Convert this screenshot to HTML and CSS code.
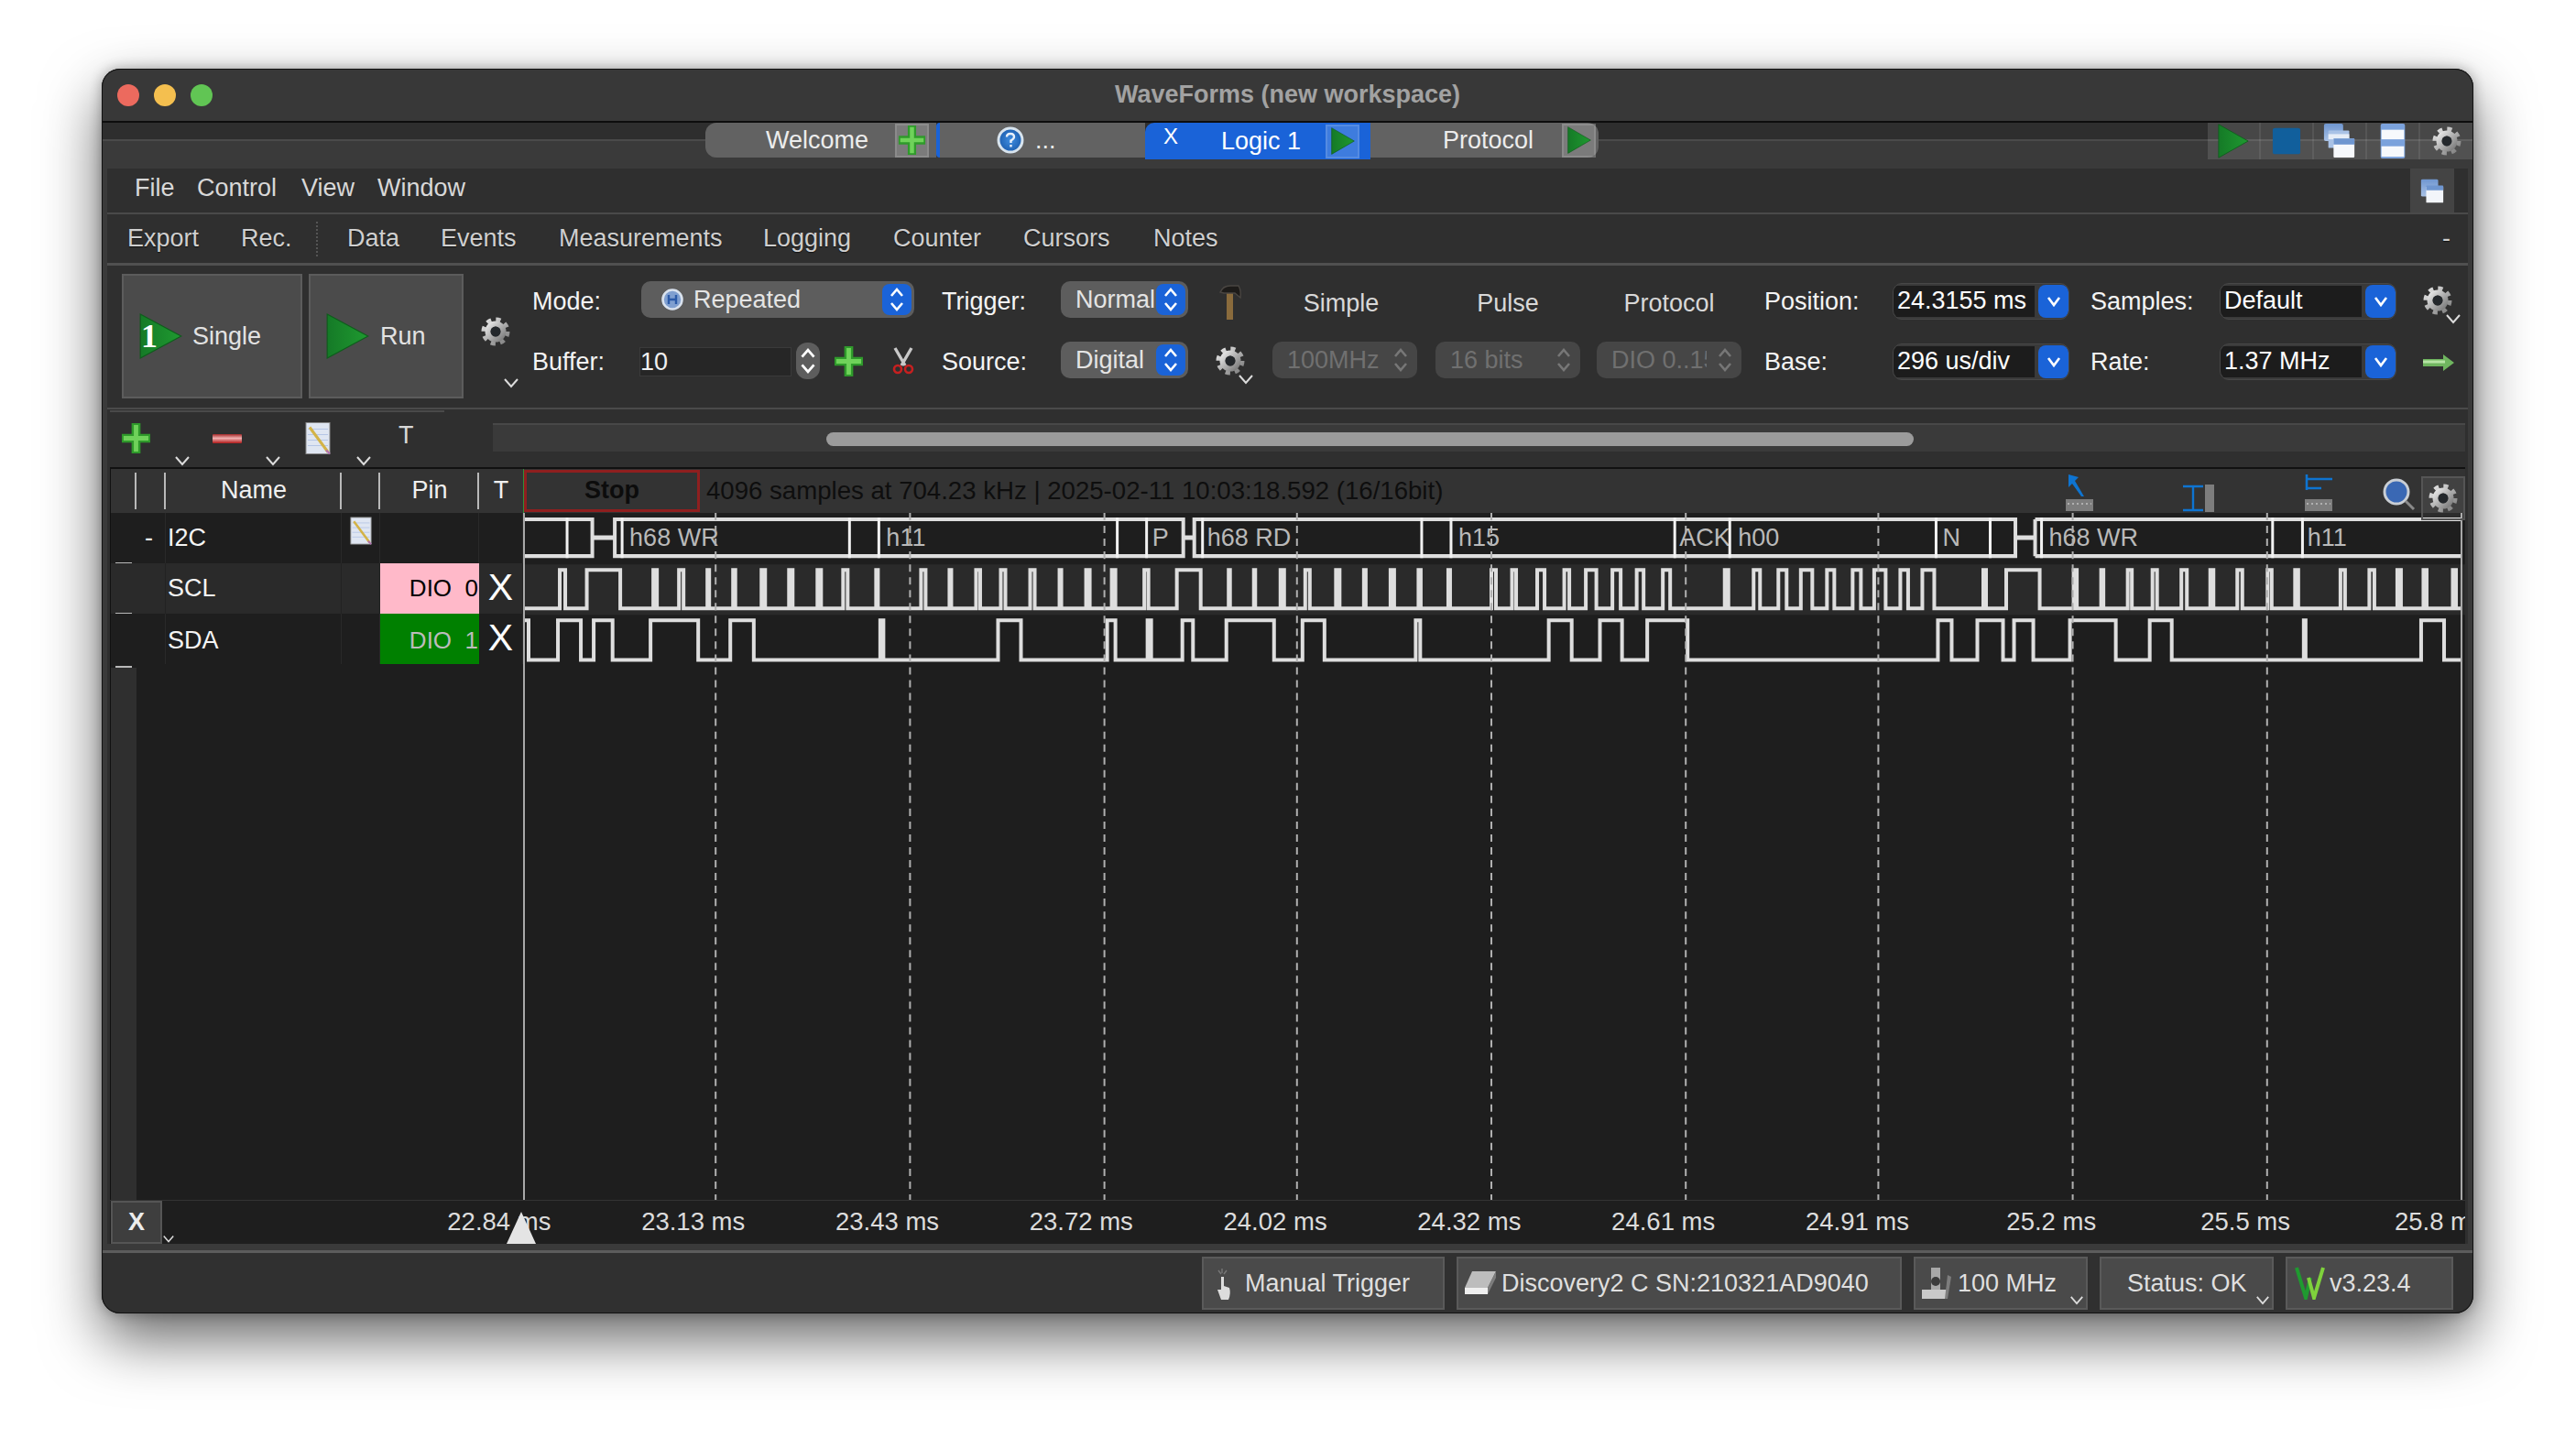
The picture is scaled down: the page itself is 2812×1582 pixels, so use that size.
FILE: index.html
```html
<!DOCTYPE html>
<html lang="en">
<head>
<meta charset="utf-8">
<title>WaveForms (new workspace)</title>
<link rel="stylesheet" href="styles.css">
</head>
<body>
<svg class="sprites" aria-hidden="true">
  <defs>
    <linearGradient id="gGray" x1="0" y1="0" x2="1" y2="1"><stop offset="0" stop-color="#e6e6e6"/><stop offset="1" stop-color="#7c7c7c"/></linearGradient>
    <linearGradient id="gGreen" x1="0" y1="0" x2="1" y2="0"><stop offset="0" stop-color="#157a27"/><stop offset="1" stop-color="#1f9a30"/></linearGradient>
    <linearGradient id="gRed" x1="0" y1="0" x2="0" y2="1"><stop offset="0" stop-color="#a52a2a"/><stop offset=".45" stop-color="#f0b0b0"/><stop offset="1" stop-color="#b01818"/></linearGradient>
    <linearGradient id="gWin" x1="0" y1="0" x2="0" y2="1"><stop offset="0" stop-color="#6f96d0"/><stop offset="1" stop-color="#a9c2e6"/></linearGradient>
    <radialGradient id="gHelp"><stop offset="0" stop-color="#3f8de0"/><stop offset="1" stop-color="#1d5fb0"/></radialGradient>
    <symbol id="i-gear" viewBox="0 0 32 32">
      <circle cx="16" cy="16" r="13" fill="none" stroke="url(#gGray)" stroke-width="5" stroke-dasharray="5.1 5.1"/>
      <circle cx="16" cy="16" r="8.5" fill="none" stroke="url(#gGray)" stroke-width="6"/>
      <circle cx="16" cy="16" r="5.4" fill="#24282c"/>
    </symbol>
    <symbol id="i-play" viewBox="0 0 40 48" preserveAspectRatio="none">
      <polygon points="1,1 39,24 1,47" fill="url(#gGreen)" stroke="#0f5c1c" stroke-width="1"/>
    </symbol>
    <symbol id="i-plus" viewBox="0 0 34 36" preserveAspectRatio="none">
      <path d="M17 1V35M1 18H33" stroke="#2f9a2b" stroke-width="10"/>
      <path d="M17 3V33M3 18H31" stroke="#6fd25a" stroke-width="5"/>
    </symbol>
    <symbol id="i-minus" viewBox="0 0 32 10"><rect width="32" height="10" rx="1" fill="url(#gRed)"/></symbol>
    <symbol id="i-chev" viewBox="0 0 18 12"><polyline points="2,2 9,10 16,2" fill="none" stroke="#dcdcdc" stroke-width="2"/></symbol>
    <symbol id="i-updown" viewBox="0 0 24 34"><polyline points="6,13 12,6 18,13" fill="none" stroke="#fff" stroke-width="2.6"/><polyline points="6,21 12,28 18,21" fill="none" stroke="#fff" stroke-width="2.6"/></symbol>
    <symbol id="i-updown-dim" viewBox="0 0 24 34"><polyline points="6,13 12,6 18,13" fill="none" stroke="#777" stroke-width="2.6"/><polyline points="6,21 12,28 18,21" fill="none" stroke="#777" stroke-width="2.6"/></symbol>
    <symbol id="i-down" viewBox="0 0 20 14"><polyline points="4,3 10,11 16,3" fill="none" stroke="#fff" stroke-width="2.6"/></symbol>
    <symbol id="i-help" viewBox="0 0 30 30">
      <circle cx="15" cy="15" r="13" fill="url(#gHelp)" stroke="#d8e4ee" stroke-width="3"/>
      <path d="M11 11.5Q11 8 15 8T19 11.5Q19 13.5 15.5 15.5V18M15.5 20V22.5" fill="none" stroke="#e8f0fa" stroke-width="2.4"/>
    </symbol>
    <symbol id="i-repeat" viewBox="0 0 24 24">
      <circle cx="12" cy="12" r="10.5" fill="#7f9fd0" stroke="#d9e2ee" stroke-width="2.6"/>
      <path d="M8 7V17M16 7V17M8 12H16" stroke="#2b5aa8" stroke-width="2.4"/>
    </symbol>
    <symbol id="i-stop" viewBox="0 0 34 44" preserveAspectRatio="none"><rect x="1" y="1" width="32" height="42" rx="3" fill="#115f9c"/></symbol>
    <symbol id="i-wins2" viewBox="0 0 30 40" preserveAspectRatio="none">
      <rect x="2" y="1" width="20" height="28" rx="2" fill="url(#gWin)"/>
      <rect x="8" y="13" width="20" height="26" rx="1" fill="#f2f5fa"/>
      <rect x="8" y="11" width="20" height="8" rx="1" fill="#6f96d0"/>
    </symbol>
    <symbol id="i-wins3" viewBox="0 0 38 40">
      <rect x="1" y="0" width="22" height="20" rx="2" fill="url(#gWin)"/>
      <rect x="6" y="8" width="24" height="20" rx="1" fill="#a9c2e6"/>
      <rect x="6" y="12" width="24" height="6" fill="#e6edf7"/>
      <rect x="12" y="17" width="24" height="22" rx="1" fill="#f7f9fc"/>
      <rect x="12" y="17" width="24" height="7" fill="#6f96d0"/>
    </symbol>
    <symbol id="i-rows" viewBox="0 0 30 40">
      <rect x="1" y="0" width="28" height="40" rx="2" fill="#7ba2dc"/>
      <rect x="2" y="7" width="26" height="11" fill="#f7f9fc"/>
      <rect x="2" y="26" width="26" height="12" fill="#f7f9fc"/>
    </symbol>
    <symbol id="i-hammer" viewBox="0 0 30 38">
      <rect x="12" y="8" width="7" height="30" fill="#8a6b3c"/>
      <path d="M5 8Q8 1 16 1H25Q28 6 27 14L21 9H9Z" fill="#1d1b19" stroke="#4a4642" stroke-width="1.4"/>
    </symbol>
    <symbol id="i-scissors" viewBox="0 0 24 30">
      <path d="M3 1L14 20M21 1L10 20" stroke="#c9c9c9" stroke-width="3.4"/>
      <circle cx="6" cy="24" r="4" fill="none" stroke="#c62020" stroke-width="2.6"/>
      <circle cx="18" cy="24" r="4" fill="none" stroke="#c62020" stroke-width="2.6"/>
    </symbol>
    <symbol id="i-note" viewBox="0 0 28 36">
      <rect x="1" y="1" width="26" height="34" fill="#dfe6f2" stroke="#8a8a8a" stroke-width="1"/>
      <path d="M3 8H25M3 14H25M3 20H25M3 26H25" stroke="#b5c6e6" stroke-width="1"/>
      <path d="M5 6L25 33" stroke="#d3b347" stroke-width="3"/>
      <path d="M23 31L27 35" stroke="#b06fb0" stroke-width="2"/>
    </symbol>
    <symbol id="i-arrow" viewBox="0 0 34 18">
      <path d="M0 5H22V0L34 9L22 18V13H0Z" fill="#6fb55f"/>
      <path d="M0 8H24" stroke="#b6e3a4" stroke-width="3"/>
    </symbol>
    <symbol id="i-ruler-arrow" viewBox="0 0 30 40">
      <path d="M3 0L14 3L10 7L20 24H17L7 10L3 14Z" fill="#0e74d1"/>
      <rect y="27" width="30" height="13" fill="#7d7d7d"/>
      <path d="M2 32H28" stroke="#b0b0b0" stroke-width="2" stroke-dasharray="2 3"/>
    </symbol>
    <symbol id="i-ruler-i" viewBox="0 0 34 30" preserveAspectRatio="none">
      <path d="M0 2H22M0 28H22M11 2V28" stroke="#0e74d1" stroke-width="2.4"/>
      <rect x="24" y="0" width="10" height="30" fill="#7d7d7d"/>
    </symbol>
    <symbol id="i-ruler-f" viewBox="0 0 30 40">
      <path d="M2 0V17M2 5H30M2 15H18" stroke="#0e74d1" stroke-width="2.6"/>
      <rect y="27" width="30" height="13" fill="#7d7d7d"/>
      <path d="M2 32H28" stroke="#b0b0b0" stroke-width="2" stroke-dasharray="2 3"/>
    </symbol>
    <symbol id="i-zoom" viewBox="0 0 36 36">
      <circle cx="15" cy="15" r="13" fill="#3a68b4" stroke="#c9ced4" stroke-width="3"/>
      <path d="M25 25L34 34" stroke="#8a8a8a" stroke-width="3"/>
    </symbol>
    <symbol id="i-hand" viewBox="0 0 20 38">
      <path d="M8 3V8M4 5L7 9M13 5L10 9" stroke="#777" stroke-width="1.4"/>
      <path d="M7 12H10V22L16 24Q18 30 15 37H7L3 26H7Z" fill="#dcdcdc"/>
    </symbol>
    <symbol id="i-device" viewBox="0 0 36 30">
      <path d="M10 2H36L27 20H2Z" fill="#bdbdbd"/>
      <path d="M2 20H27V27H2Z" fill="#efefef"/>
      <path d="M27 20L36 2V9L27 27Z" fill="#7c7c7c"/>
    </symbol>
    <symbol id="i-scope" viewBox="0 0 36 38">
      <path d="M12 2H22V26H12Z" fill="#a8a8a8"/>
      <circle cx="17" cy="17" r="5" fill="#3b3b3b"/>
      <path d="M2 26H30L28 36H2Z" fill="#c9c9c9"/>
      <path d="M30 10L34 12L30 36H27Z" fill="#7d7d7d"/>
    </symbol>
    <symbol id="i-logo" viewBox="0 0 34 36">
      <polyline points="3,1 13,34 18,12" fill="none" stroke="#1f9a30" stroke-width="4"/>
      <polyline points="16,12 22,34 32,1" fill="none" stroke="#7fd23c" stroke-width="4"/>
    </symbol>
  </defs>
</svg>

<main class="window">
  <header class="titlebar">
    <div class="lights"><span class="light red"></span><span class="light yellow"></span><span class="light green"></span></div>
    <div class="title">WaveForms (new workspace)</div>
    <div></div>
  </header>

  <div class="tabrow">
    <div class="tabstrip">
      <div class="tab tab-welcome"><span class="tab-text welcome-text">Welcome</span><span class="tab-btn"><svg class="i-plus-sm"><use href="#i-plus"/></svg></span></div>
      <div class="tab-sliver"></div>
      <div class="tab tab-help"><svg class="i-help"><use href="#i-help"/></svg><span class="tab-text help-text">...</span></div>
      <div class="tab tab-active"><span class="tab-x">X</span><span class="tab-text logic-text">Logic 1</span><span class="tab-btn tab-btn-end"><svg class="i-play-sm"><use href="#i-play"/></svg></span></div>
      <div class="tab tab-protocol"><span class="tab-text protocol-text">Protocol</span><span class="tab-btn tab-btn-end"><svg class="i-play-sm"><use href="#i-play"/></svg></span></div>
    </div>
    <div class="tools">
      <span class="tool"><svg class="i-tool-play"><use href="#i-play"/></svg></span>
      <span class="tool"><svg class="i-tool-stop"><use href="#i-stop"/></svg></span>
      <span class="tool"><svg class="i-tool-wins"><use href="#i-wins3"/></svg></span>
      <span class="tool"><svg class="i-tool-rows"><use href="#i-rows"/></svg></span>
      <span class="tool"><svg class="i-tool-gear"><use href="#i-gear"/></svg></span>
    </div>
  </div>

  <div class="panel">
    <nav class="menu">
      <span class="menu-item m-file">File</span>
      <span class="menu-item m-control">Control</span>
      <span class="menu-item m-view">View</span>
      <span class="menu-item m-window">Window</span>
      <span class="menu-btn"><svg class="i-menu-wins"><use href="#i-wins2"/></svg></span>
    </nav>

    <nav class="subtabs">
      <span class="sub s-export">Export</span>
      <span class="sub s-rec">Rec.</span>
      <span class="sub-sep"></span>
      <span class="sub s-data">Data</span>
      <span class="sub s-events">Events</span>
      <span class="sub s-meas">Measurements</span>
      <span class="sub s-log">Logging</span>
      <span class="sub s-count">Counter</span>
      <span class="sub s-curs">Cursors</span>
      <span class="sub s-notes">Notes</span>
      <span class="sub s-dash">-</span>
    </nav>

    <section class="toolbar">
      <button class="bigbtn single"><span class="play-wrap"><svg class="i-big-play"><use href="#i-play"/></svg><span class="one">1</span></span><span>Single</span></button>
      <button class="bigbtn run"><svg class="i-big-play"><use href="#i-play"/></svg><span>Run</span></button>
      <div class="gearcol"><svg class="i-gear"><use href="#i-gear"/></svg><svg class="i-chev gearcol-chev"><use href="#i-chev"/></svg></div>

      <div class="form">
        <span class="lbl">Mode:</span>
        <div class="cell"><div class="select select-mode"><svg class="i-repeat"><use href="#i-repeat"/></svg><span class="sel-text">Repeated</span><span class="stepper"><svg><use href="#i-updown"/></svg></span></div></div>
        <span class="lbl">Trigger:</span>
        <div class="cell"><div class="select select-trig"><span class="sel-text clip">Normal</span><span class="stepper"><svg><use href="#i-updown"/></svg></span></div></div>
        <div class="cell"><svg class="i-hammer"><use href="#i-hammer"/></svg></div>
        <div class="cell"><span class="opt-lbl opt-simple">Simple</span></div>
        <div class="cell"><span class="opt-lbl">Pulse</span></div>
        <div class="cell"><span class="opt-lbl">Protocol</span></div>
        <span class="lbl">Position:</span>
        <div class="cell"><div class="combo"><span class="combo-field">24.3155 ms</span><span class="combo-btn"><svg><use href="#i-down"/></svg></span></div></div>
        <span class="lbl">Samples:</span>
        <div class="cell"><div class="combo"><span class="combo-field">Default</span><span class="combo-btn"><svg><use href="#i-down"/></svg></span></div></div>
        <div class="cell gearcell"><svg class="i-gear"><use href="#i-gear"/></svg><svg class="i-chev overlay-chev"><use href="#i-chev"/></svg></div>

        <span class="lbl">Buffer:</span>
        <div class="cell"><span class="numinput">10</span><span class="spin"><svg><use href="#i-updown"/></svg></span><svg class="i-plus-md"><use href="#i-plus"/></svg><svg class="i-scissors"><use href="#i-scissors"/></svg></div>
        <span class="lbl">Source:</span>
        <div class="cell"><div class="select select-trig"><span class="sel-text">Digital</span><span class="stepper"><svg><use href="#i-updown"/></svg></span></div></div>
        <div class="cell gearcell"><svg class="i-gear"><use href="#i-gear"/></svg><svg class="i-chev overlay-chev"><use href="#i-chev"/></svg></div>
        <div class="cell"><div class="select select-off"><span class="sel-text">100MHz</span><span class="dimstep"><svg><use href="#i-updown-dim"/></svg></span></div></div>
        <div class="cell"><div class="select select-off"><span class="sel-text">16 bits</span><span class="dimstep"><svg><use href="#i-updown-dim"/></svg></span></div></div>
        <div class="cell"><div class="select select-off"><span class="sel-text clip-dio">DIO 0..15</span><span class="dimstep"><svg><use href="#i-updown-dim"/></svg></span></div></div>
        <span class="lbl">Base:</span>
        <div class="cell"><div class="combo"><span class="combo-field">296 us/div</span><span class="combo-btn"><svg><use href="#i-down"/></svg></span></div></div>
        <span class="lbl">Rate:</span>
        <div class="cell"><div class="combo"><span class="combo-field">1.37 MHz</span><span class="combo-btn"><svg><use href="#i-down"/></svg></span></div></div>
        <div class="cell"><svg class="i-arrow"><use href="#i-arrow"/></svg></div>
      </div>
    </section>

    <section class="iconrow">
      <div class="icongroup"><span class="iconbox"><svg class="i-plus-md"><use href="#i-plus"/></svg></span><svg class="i-chev row-chev"><use href="#i-chev"/></svg></div>
      <div class="icongroup"><span class="iconbox"><svg class="i-minus"><use href="#i-minus"/></svg></span><svg class="i-chev row-chev"><use href="#i-chev"/></svg></div>
      <div class="icongroup"><span class="iconbox"><svg class="i-note"><use href="#i-note"/></svg></span><svg class="i-chev row-chev"><use href="#i-chev"/></svg></div>
      <span class="t-label">T</span>
      <div class="track"><div class="thumb"></div></div>
    </section>

    <section class="scope">
      <div class="channels">
        <div class="chan-head">
          <span class="c c1"></span><span class="c c2"></span><span class="c c3">Name</span><span class="c c4"></span><span class="c c5">Pin</span><span class="c c6">T</span>
        </div>
        <div class="chan-row row-dark">
          <span class="c c1"></span><span class="c c2 dash">-</span><span class="c c3 name">I2C</span><span class="c c4"><svg class="i-note-sm"><use href="#i-note"/></svg></span><span class="c c5"></span><span class="c c6"></span>
        </div>
        <div class="chan-row row-light">
          <span class="c c1"></span><span class="c c2"></span><span class="c c3 name">SCL</span><span class="c c4"></span><span class="c c5 pin pin-pink">DIO&nbsp;&nbsp;0</span><span class="c c6 xmark">X</span>
        </div>
        <div class="chan-row row-dark row-sda">
          <span class="c c1"></span><span class="c c2"></span><span class="c c3 name">SDA</span><span class="c c4"></span><span class="c c5 pin pin-green">DIO&nbsp;&nbsp;1</span><span class="c c6 xmark">X</span>
        </div>
        <div class="chan-rest"></div>
      </div>

      <div class="plot">
        <div class="plot-head">
          <span class="stop">Stop</span>
          <span class="acq">4096 samples at 704.23 kHz | 2025-02-11 10:03:18.592 (16/16bit)</span>
          <div class="plot-tools">
            <svg class="i-rul-a"><use href="#i-ruler-arrow"/></svg>
            <svg class="i-rul-i"><use href="#i-ruler-i"/></svg>
            <svg class="i-rul-f"><use href="#i-ruler-f"/></svg>
            <svg class="i-zoom"><use href="#i-zoom"/></svg>
            <span class="plot-gear"><svg class="i-gear"><use href="#i-gear"/></svg></span>
          </div>
        </div>
        <svg class="wave" viewBox="572 560 2118 748" preserveAspectRatio="none">
          <rect class="band-light" x="572" y="616" width="2118" height="55"/>
          <g class="bus-label">
            <text x="688" y="596">h68 WR</text><text x="968" y="596">h11</text><text x="1258" y="596">P</text>
            <text x="1318" y="596">h68 RD</text><text x="1592" y="596">h15</text><text x="1833" y="596">ACK</text>
            <text x="1897" y="596">h00</text><text x="2120" y="596">N</text><text x="2236" y="596">h68 WR</text><text x="2518" y="596">h11</text>
          </g>
          <g class="trace">
            <path d="M572 567H647.500V607H572M672 567H1292V607H672ZM1304 567H2199.500V607H1304ZM2221 567H2687M2221 607H2687M2221 567V607"/>
            <path class="bus-mid" d="M648 587H672M1292 587H1304M2199 587H2221"/>
            <path d="M572 664H612V622H618V664H641.500V622H678V664H714V622H718V664H742V622H747V664H773V622H775V664H801V622H803.500V664H832V622H836V664H862V622H866V664H893V622H897V664H921V622H926V664H957V622H959V664H1006V622H1011V664H1037V622H1039V664H1066V622H1070.500V664H1093V622H1098V664H1125V622H1130V664H1157V622H1159V664H1186V622H1190V664H1214V622H1218V664H1249.500V622H1254V664H1285V622H1311V664H1341.500V622H1343V664H1369V622H1370.500V664H1398V622H1402V664H1425V622H1430V664H1458.500V622H1462.500V664H1489V622H1491V664H1518V622H1522V664H1548.500V622H1551V664H1581V622H1583V664H1628V622H1633V664H1650.500V622H1655V664H1678V622H1686V664H1707.500V622H1713V664H1731V622H1742.500V664H1760V622H1769V664H1786.500V622H1794V664H1815V622H1823V664H1882.500V622H1886.500V664H1914V622H1921V664H1941V622H1950V664H1965.500V622H1978V664H1994V622H2002V664H2022V622H2031V664H2045.500V622H2058V664H2074V622H2082.500V664H2098V622H2111V664H2164.500V622H2167.500V664H2189.500V622H2226V664H2263V622H2266.500V664H2293V622H2295.500V664H2322V622H2326.500V664H2349V622H2354V664H2380.500V622H2386.500V664H2412V622H2415.500V664H2441.500V622H2447V664H2474.500V622H2479V664H2504.500V622H2508V664H2554V622H2559V664H2585.500V622H2591V664H2616V622H2620V664H2644.500V622H2648V664H2676.500V622H2680V664H2687"/>
            <path d="M572 677H578V720H610V677H635V720H649V677H669.600V720H711V677H763V720H798V677H823.600V720H961.500V677H965V720H1090V677H1115V720H1209V677H1218V720H1253V677H1257V720H1291V677H1302.600V720H1339V677H1391V720H1422V677H1446V720H1545.500V677H1550.400V720H1690.600V677H1715.600V720H1746.400V677H1770.500V720H1798V677H1842V720H2115V677H2130V720H2158V677H2186V720H2198V677H2219V720H2259V677H2309V720H2346V677H2370V720H2514V677H2516V720H2642V677H2667V720H2687"/>
          </g>
          <path class="ticks" d="M620 565V609M680 565V609M928 565V609M960 565V609M1220 565V609M1252 565V609M1313 565V609M1552 565V609M1584 565V609M1828 565V609M1888 565V609M2113 565V609M2172 565V609M2228 565V609M2480 565V609M2512.600 565V609"/>
          <path class="solid" d="M573 560V1308M2686 560V1308"/>
          <path class="grid" d="M782 560V1308M994 560V1308M1206 560V1308M1416 560V1308M1628 560V1308M1840 560V1308M2050 560V1308M2262 560V1308M2474 560V1308"/>
        </svg>
      </div>
    </section>

    <section class="axis">
      <span class="xbtn">X</span>
      <svg class="i-chev axis-chev"><use href="#i-chev"/></svg>
      <div class="ticks-row">
        <span class="tick">22.84 ms</span><span class="tick">23.13 ms</span><span class="tick">23.43 ms</span><span class="tick">23.72 ms</span><span class="tick">24.02 ms</span><span class="tick">24.32 ms</span><span class="tick">24.61 ms</span><span class="tick">24.91 ms</span><span class="tick">25.2 ms</span><span class="tick">25.5 ms</span><span class="tick">25.8 ms</span>
      </div>
      <span class="trigger-mark"></span>
    </section>
  </div>

  <footer class="statusbar">
    <span class="sbtn sb-manual"><svg class="i-hand"><use href="#i-hand"/></svg>Manual Trigger</span>
    <span class="sbtn sb-device"><svg class="i-device"><use href="#i-device"/></svg>Discovery2 C SN:210321AD9040</span>
    <span class="sbtn sb-clock"><svg class="i-scope"><use href="#i-scope"/></svg>100 MHz<svg class="i-chev sb-chev"><use href="#i-chev"/></svg></span>
    <span class="sbtn sb-status">Status: OK<svg class="i-chev sb-chev"><use href="#i-chev"/></svg></span>
    <span class="sbtn sb-version"><svg class="i-logo"><use href="#i-logo"/></svg>v3.23.4</span>
  </footer>
</main>
</body>
</html>
```
FILE: styles.css
```css
* { box-sizing: border-box; }
html, body { margin: 0; height: 100%; }
body {
  background: #fff;
  padding: 75px 112px 148px 111px;
  font-family: "Liberation Sans", Arial, sans-serif;
  font-size: 27px;
  color: #d8d8d8;
  overflow: hidden;
}
.sprites { position: absolute; width: 0; height: 0; }
svg { display: block; flex: none; }

.window {
  height: 1359px;
  display: flex;
  flex-direction: column;
  border-radius: 20px;
  overflow: hidden;
  background: #3a3a3a;
  outline: 1px solid #111;
  outline-offset: -1px;
  box-shadow: 0 28px 64px rgba(0,0,0,.6), 0 0 14px rgba(0,0,0,.3);
  position: relative;
}

/* title bar */
.titlebar {
  height: 59px;
  flex: none;
  background: #383838;
  border-bottom: 2px solid #0d0d0d;
  display: grid;
  grid-template-columns: 1fr auto 1fr;
  align-items: center;
}
.lights { display: flex; gap: 16px; padding-left: 17px; }
.light { width: 24px; height: 24px; border-radius: 50%; }
.red { background: #ec6a5e; }
.yellow { background: #f4bf4f; }
.green { background: #61c554; }
.title { font-weight: 700; color: #a2a2a2; font-size: 27px; }

/* tabs */
.tabrow {
  height: 50px;
  flex: none;
  display: flex;
  align-items: flex-start;
  padding-left: 659px;
  background: linear-gradient(#2e2e2e 0 18px, #4a4a4a 18px 20px, #3a3a3a 20px);
}
.tabstrip { display: flex; height: 40px; }
.tab { display: flex; align-items: center; height: 38px; background: #626262; color: #ececec; flex: none; }
.tab-welcome { width: 252px; border-radius: 12px 0 0 12px; }
.welcome-text { margin-left: 66px; width: 141px; }
.tab-sliver { width: 4px; height: 38px; background: #1a63d8; border-radius: 4px 0 0 4px; }
.tab-help { width: 224px; }
.i-help { width: 30px; height: 30px; margin-left: 62px; }
.help-text { margin-left: 12px; }
.tab-active { width: 246px; height: 40px; background: #1a63d8; color: #fff; border-radius: 10px 0 0 0; }
.tab-x { margin-left: 20px; width: 16px; font-size: 24px; margin-top: -10px; }
.logic-text { margin-left: 47px; }
.tab-protocol { width: 249px; border-radius: 0 12px 12px 0; }
.protocol-text { margin-left: 79px; }
.tab-btn { width: 37px; height: 37px; display: flex; align-items: center; justify-content: center; background: rgba(255,255,255,.16); border: 2px solid rgba(255,255,255,.12); }
.tab-btn-end { margin-left: auto; margin-right: 6px; }
.tab-active .tab-btn-end { margin-right: 12px; }
.tab-protocol .tab-btn-end { margin-right: 3px; }
.i-plus-sm { width: 31px; height: 34px; }
.i-play-sm { width: 26px; height: 30px; }
.tools { margin-left: auto; width: 290px; height: 40px; display: flex; background: rgba(255,255,255,.12); }
.tool { width: 58px; display: flex; align-items: center; justify-content: center; border-right: 2px solid rgba(255,255,255,.08); }
.tool:last-child { border-right: 0; }
.i-tool-play { width: 34px; height: 38px; }
.i-tool-stop { width: 32px; height: 30px; }
.i-tool-wins { width: 38px; height: 38px; }
.i-tool-rows { width: 30px; height: 38px; }
.i-tool-gear { width: 32px; height: 34px; }

/* panel */
.panel { flex: none; height: 1174px; margin: 0 6px; background: #2f2f2f; display: flex; flex-direction: column; }

.menu { height: 50px; flex: none; display: flex; align-items: center; border-bottom: 2px solid #4a4a4a; color: #d8d8d8; }
.menu-item { margin-bottom: 6px; }
.m-file { margin-left: 30px; width: 68px; }
.m-control { width: 114px; }
.m-view { width: 83px; }
.menu-btn { margin-left: auto; margin-right: 15px; width: 48px; height: 48px; background: #444; display: flex; align-items: center; justify-content: center; }
.i-menu-wins { width: 28px; height: 27px; }

.subtabs { height: 56px; flex: none; display: flex; align-items: center; border-bottom: 3px solid #505050; color: #cfcfcf; }
.sub { text-shadow: 0 1px 1px #111; flex: none; }
.s-export { margin-left: 22px; width: 124px; }
.s-rec { width: 82px; }
.sub-sep { width: 0; height: 38px; border-left: 2px dotted #555; margin-right: 32px; }
.s-data { width: 102px; }
.s-events { width: 129px; }
.s-meas { width: 223px; }
.s-log { width: 142px; }
.s-count { width: 142px; }
.s-curs { width: 142px; }
.s-dash { margin-left: auto; margin-right: 19px; }

/* toolbar */
.toolbar { height: 157px; flex: none; display: flex; align-items: flex-start; border-bottom: 2px solid #4a4a4a; padding-left: 16px; }
.bigbtn {
  height: 136px; margin-top: 9px; flex: none;
  background: #4b4b4b; border: 2px solid #5c5c5c;
  display: flex; align-items: center;
  color: #e2e2e2; font: inherit; padding: 0;
}
.single { width: 197px; padding-left: 17px; gap: 11px; margin-right: 7px; }
.run { width: 169px; padding-left: 17px; gap: 12px; }
.play-wrap { position: relative; display: block; }
.i-big-play { width: 47px; height: 50px; }
.one { position: absolute; left: 2px; top: 4px; font: 700 36px "Liberation Serif", serif; color: #fff; }
.gearcol { width: 75px; height: 155px; flex: none; padding: 55px 0 0 19px; position: relative; }
.i-gear { width: 32px; height: 34px; }
.i-chev { width: 18px; height: 12px; }
.gearcol-chev { margin: 33px 0 0 24px; }

.form {
  margin-top: 5px;
  display: grid;
  grid-template-columns: 117px 330px 130px 169px 62px 178px 176px 183px 140px 216px 141px 222px 35px;
  grid-template-rows: 66px 66px;
  align-items: center;
}
.lbl { color: #f4f4f4; margin-top: 2px; }
.cell { display: flex; align-items: center; position: relative; }
.select { height: 40px; background: #5d5d5d; border-radius: 10px; display: flex; align-items: center; color: #e4e4e4; margin-bottom: 2px; position: relative; }
.select-mode { width: 298px; margin-left: 2px; }
.i-repeat { width: 24px; height: 26px; margin-left: 22px; }
.select-mode .sel-text { margin-left: 11px; }
.select-trig { width: 139px; padding-left: 16px; }
.clip { width: 88px; overflow: hidden; }
.stepper { position: absolute; right: 3px; top: 3px; width: 32px; height: 34px; background: #1a63d8; border-radius: 8px; }
.stepper svg { width: 32px; height: 34px; }
.select-off { width: 158px; background: #464646; color: #707070; padding-left: 16px; }
.clip-dio { width: 104px; overflow: hidden; white-space: nowrap; }
.dimstep { position: absolute; right: 4px; top: 3px; }
.dimstep svg { width: 28px; height: 34px; }
.opt-lbl { width: 158px; text-align: center; color: #d8d8d8; margin-top: 6px; }
.opt-simple { margin-left: -4px; }
.i-hammer { width: 30px; height: 38px; margin-top: 4px; }
.combo { width: 193px; height: 40px; margin-top: 2px; border: 1px solid #474747; border-radius: 10px; background: #3a3a3a; display: flex; align-items: center; overflow: hidden; }
.combo-field { width: 154px; height: 34px; background: #1c1c1c; color: #fff; padding-left: 4px; line-height: 32px; white-space: nowrap; overflow: hidden; }
.combo-btn { width: 33px; height: 36px; margin-left: 4px; background: #1a63d8; border-radius: 8px; display: flex; align-items: center; justify-content: center; }
.combo-btn svg { width: 20px; height: 14px; }
.numinput { width: 166px; height: 32px; margin-top: 2px; background: #262626; border: 1px solid #3a3a3a; color: #f0f0f0; line-height: 30px; }
.spin { width: 26px; height: 40px; margin-left: 5px; border-radius: 12px; background: #5d5d5d; }
.spin svg { width: 26px; height: 40px; }
.i-plus-md { width: 33px; height: 35px; }
.cell .i-plus-md { margin-left: 15px; }
.i-scissors { width: 24px; height: 30px; margin-left: 31px; }
.gearcell { height: 40px; }
.overlay-chev { position: absolute; left: 24px; top: 34px; }
.i-arrow { width: 34px; height: 18px; margin-top: 4px; }

/* icon row */
.iconrow {
  height: 63px; flex: none; display: flex; align-items: flex-start; padding: 13px 3px 0 15px;
  background: linear-gradient(#4a4a4a, #4a4a4a) 3px 1px / 365px 2px no-repeat;
}
.icongroup { width: 99px; display: flex; flex: none; }
.iconbox { width: 33px; height: 37px; display: flex; align-items: center; justify-content: center; }
.row-chev { margin: 37px 0 0 25px; }
.i-minus { width: 32px; height: 10px; }
.i-note { width: 28px; height: 37px; }
.t-label { width: 109px; padding-left: 6px; color: #d8d8d8; }
.track { flex: 1; height: 31px; margin-top: 2px; background: #3a3a3a; border-top: 2px solid #484848; padding: 8px 0 0 364px; }
.thumb { width: 1187px; height: 15px; border-radius: 8px; background: #9b9b9b; }

/* scope */
.scope { height: 800px; flex: none; margin: 0 3px; display: flex; border-top: 2px solid #111; border-left: 1px solid #111; }
.channels { width: 450px; flex: none; display: flex; flex-direction: column; }
.chan-head, .chan-row { display: grid; grid-template-columns: 28px 32px 192px 42px 108px 48px; flex: none; }
.chan-head { height: 48px; background: #333; text-align: center; line-height: 46px; color: #f0f0f0; }
.chan-head .c { position: relative; }
.chan-head .c::after { content: ""; position: absolute; right: 0; top: 4px; bottom: 4px; width: 2px; background: #b9b9b9; }
.chan-head .c6::after { display: none; }
.chan-row { height: 55px; line-height: 55px; color: #f4f4f4; }
.chan-row.row-sda { line-height: 58px; }
.chan-row .c1 { background: #2f2f2f; position: relative; }
.chan-row .c1::after { content: ""; position: absolute; left: 5px; right: 5px; bottom: 0; height: 2px; background: #b9b9b9; }
.row-dark .c { background: #1e1e1e; border-right: 1px solid #292929; }
.row-light .c { background: #2a2a2a; border-right: 1px solid #222; }
.chan-row .c { border-bottom: 1px solid #181818; }
.chan-row .c1 { border-right: 0; border-bottom: 0; }
.dash { padding-left: 9px; }
.name { padding-left: 2px; }
.i-note-sm { width: 24px; height: 31px; margin: 4px 0 0 9px; }
.chan-row .pin { text-align: right; padding-right: 1px; border: 0; font-size: 26px; }
.row-light .pin-pink { background: #ffb9c9; color: #000; }
.row-dark .pin-green { background: #008000; color: #bcbcbc; }
.chan-row .xmark { font-size: 41px; color: #fff; text-align: center; line-height: 52px; }
.chan-rest { flex: 1; background: linear-gradient(90deg, #2f2f2f 28px, #1e1e1e 28px); }

.plot { flex: 1; display: flex; flex-direction: column; min-width: 0; }
.plot-head { height: 48px; flex: none; background: #333; display: flex; align-items: center; border-left: 1px solid #2f8f3a; }
.stop { width: 192px; height: 46px; border: 3px solid #8f1f1f; color: #0c0c0c; font-weight: 700; text-align: center; line-height: 38px; flex: none; }
.acq { margin-left: 7px; color: #0e0e0e; white-space: nowrap; font-size: 27.600px; }
.plot-tools { margin-left: auto; height: 48px; display: flex; align-items: flex-start; }
.i-rul-a { width: 30px; height: 40px; margin-top: 6px; }
.i-rul-i { width: 34px; height: 30px; margin: 17px 0 0 98px; }
.i-rul-f { width: 30px; height: 40px; margin: 6px 0 0 99px; }
.i-zoom { width: 36px; height: 36px; margin: 10px 0 0 55px; }
.plot-gear { width: 48px; height: 48px; margin: 8px 0 0 6px; background: rgba(255,255,255,.07); border: 2px solid #555; position: relative; z-index: 1; display: flex; align-items: center; justify-content: center; }
.wave { flex: 1; width: 100%; min-height: 0; background: #1e1e1e; }
.band-light { fill: #2a2a2a; }
.bus-label { font: 27px "Liberation Sans", Arial, sans-serif; fill: #b9b9b9; }
.trace { fill: none; stroke: #dedede; stroke-width: 4; filter: blur(.4px); }
.trace .bus-mid { stroke-width: 5; }
.ticks { fill: none; stroke: #f2f2f2; stroke-width: 3; }
.solid { fill: none; stroke: #a8a8a8; stroke-width: 2; }
.grid { fill: none; stroke: #b0b0b0; stroke-width: 2; stroke-dasharray: 8 6; }

/* axis */
.axis { height: 48px; flex: none; margin: 0 3px; padding-left: 1px; background: #1e1e1e; display: flex; align-items: flex-start; position: relative; border-top: 1px solid #333; overflow: hidden; }
.xbtn { width: 56px; height: 47px; flex: none; background: #3e3e3e; border: 2px solid #555; font-weight: 700; color: #ececec; text-align: center; line-height: 42px; }
.axis-chev { width: 14px; height: 9px; margin: 37px 0 0 0; }
.ticks-row { display: flex; margin-left: 248px; padding-top: 7px; }
.tick { width: 211.800px; flex: none; text-align: center; color: #dcdcdc; font-size: 27.500px; white-space: nowrap; }
.trigger-mark { position: absolute; left: 433px; top: 12px; width: 0; height: 0; border-left: 16px solid transparent; border-right: 16px solid transparent; border-bottom: 35px solid #e4e4e4; }

/* status */
.statusbar { margin-top: 7px; flex: 1; min-height: 0; border-top: 3px solid #5c5c5c; background: #303030; display: flex; gap: 13px; padding: 4px 0 0 1201px; }
.sbtn { height: 58px; flex: none; background: #4a4a4a; border: 2px solid #5a5a5a; display: flex; align-items: center; color: #dfdfdf; position: relative; white-space: nowrap; }
.sb-manual { width: 265px; padding-left: 12px; gap: 13px; }
.sb-device { width: 486px; padding-left: 5px; gap: 6px; }
.sb-clock { width: 190px; padding-left: 5px; gap: 5px; }
.sb-status { width: 190px; padding-left: 28px; }
.sb-version { width: 183px; padding-left: 7px; gap: 5px; }
.i-hand { width: 20px; height: 38px; }
.i-device { width: 36px; height: 30px; }
.i-scope { width: 36px; height: 38px; }
.i-logo { width: 34px; height: 36px; }
.sb-chev { position: absolute; right: 2px; bottom: 3px; width: 16px; height: 11px; }
```
